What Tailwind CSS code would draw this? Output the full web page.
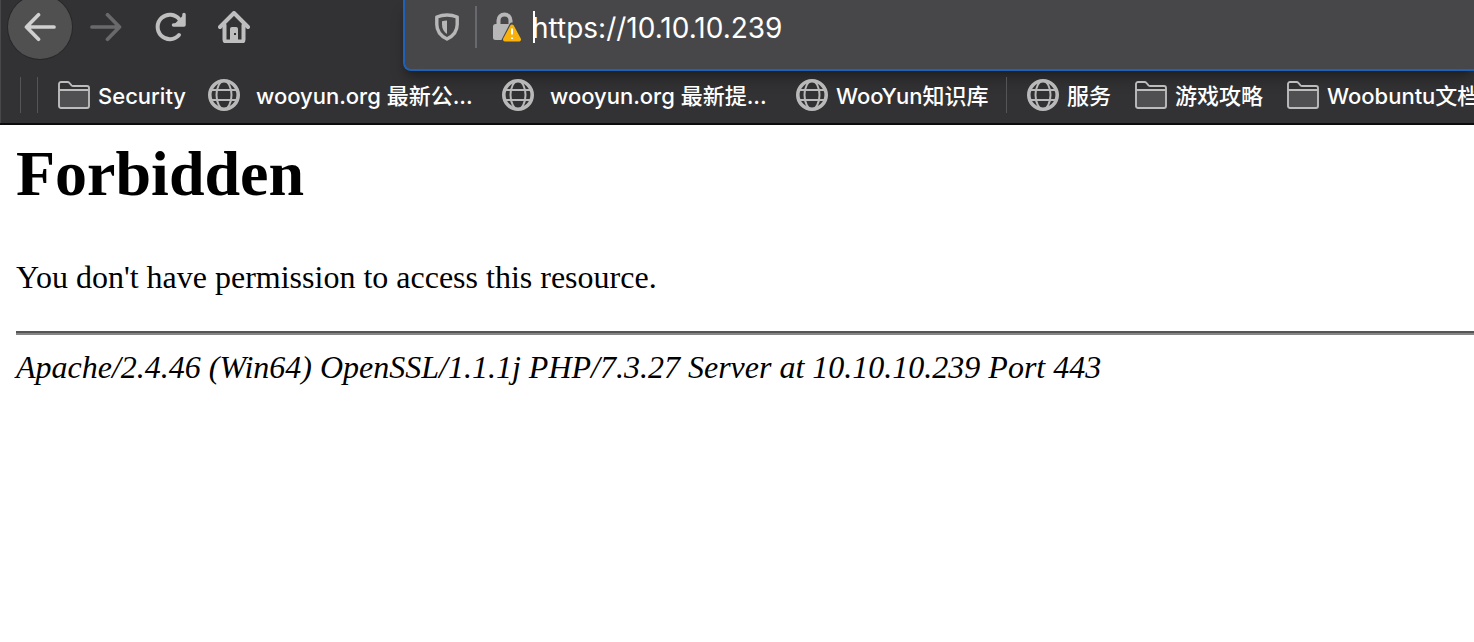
<!DOCTYPE html>
<html lang="en">
<head>
<meta charset="utf-8">
<meta name="viewport" content="width=device-width, initial-scale=1">
<title>403 Forbidden</title>
<script src="https://cdn.jsdelivr.net/npm/@tailwindcss/browser@4"></script>
</head>
<body class="min-h-screen overflow-x-hidden bg-white text-black">
<svg class="hidden" aria-hidden="true">
  <symbol id="folder" viewBox="0 0 32 28">
    <path d="M1 9h30v16a2 2 0 0 1-2 2H3a2 2 0 0 1-2-2z" fill="#505052"/>
    <path d="M1 9V3a2 2 0 0 1 2-2h6.500c1 0 1.500.4 2 1l2 2.300c.5.500 1 .7 1.700.7H29a2 2 0 0 1 2 2v18a2 2 0 0 1-2 2H3a2 2 0 0 1-2-2V9h30" fill="none" stroke="#bcbcbd" stroke-width="1.900"/>
  </symbol>
  <symbol id="globe" viewBox="0 0 32 32">
    <g fill="none" stroke="#b9b9ba">
      <circle cx="16" cy="16" r="14.200" stroke-width="3.600"/>
      <ellipse cx="16" cy="16" rx="7.500" ry="14" stroke-width="2"/>
      <path d="M3 11h26M3 21h26" stroke-width="2"/>
    </g>
  </symbol>
</svg>

<header class="overflow-hidden border-b-2 border-[#0c0c0d] bg-[#323234] font-['Inter','Noto_Sans_CJK_SC',sans-serif] text-white">
  <div class="flex h-[71px] border-l border-[#48484a]">
    <nav class="flex h-[54px] w-[402px] shrink-0 items-center pl-[7px]" aria-label="Navigation">
      <button aria-label="Back" class="grid size-16 shrink-0 place-items-center rounded-full bg-[#505051] ring-1 ring-[#28282a]">
        <svg class="size-8" viewBox="0 0 32 32" fill="none" stroke="#d0d0d1" stroke-width="3.700" stroke-linecap="round" stroke-linejoin="round"><path d="M30 16H3M14.500 3.800 2.500 16l12 12.200"/></svg>
      </button>
      <button aria-label="Forward" class="ml-[18px]">
        <svg class="size-8" viewBox="0 0 32 32" fill="none" stroke="#69696b" stroke-width="3.700" stroke-linecap="round" stroke-linejoin="round"><path d="M2 16h27M17.500 3.800l12 12.200-12 12.200"/></svg>
      </button>
      <button aria-label="Reload" class="ml-8">
        <svg class="size-8" viewBox="0 0 32 32" fill="none" stroke="#bebebf" stroke-linecap="round" stroke-linejoin="round"><path d="M25 24A12.200 12.200 0 1 1 25.500 8.500l3 3" stroke-width="4"/><path d="M30 3.500V14H19.500z" fill="#bebebf" stroke="none"/><path d="M30 3.500V14H19.500" stroke-width="3.500"/></svg>
      </button>
      <button aria-label="Home" class="ml-8">
        <svg class="size-8" viewBox="0 0 32 32" fill="none" stroke="#bebebf" stroke-width="4" stroke-linecap="round" stroke-linejoin="round"><path d="M2 16 16 2l14 14"/><path d="M6.500 14v14.500a2 2 0 0 0 2 2h15a2 2 0 0 0 2-2V14"/><path d="M12 30V18a2 2 0 0 1 2-2h4a2 2 0 0 1 2 2v12z" fill="#bebebf" stroke="none"/><path d="M16 22h2v2h-2z" fill="#323234" stroke="none"/></svg>
      </button>
    </nav>
    <div class="flex min-w-0 grow items-start rounded-bl-lg border-b-2 border-l-2 border-[#1d62b8] bg-[#474749] shadow-lg shadow-black/30">
      <div class="flex h-[54px] grow items-center pl-7">
        <button aria-label="Tracking protection" class="shrink-0">
          <svg class="h-7 w-7" viewBox="0 0 28 28"><path d="M14 2c4 0 7 .7 10.200 2v7.500c0 6.500-4 11.500-10.200 14.500C7.800 23 3.800 18 3.800 11.500V4C7 2.700 10 2 14 2z" fill="none" stroke="#b7b7b8" stroke-width="3.400" stroke-linejoin="round"/><path d="M14 7.500v13.500c-3.200-2-5-5.200-5-9.500V8.200c1.600-.5 3.200-.7 5-.7z" fill="#b7b7b8"/></svg>
        </button>
        <span class="ml-3.5 h-[42px] w-0.5 bg-[#68696f]"></span>
        <button aria-label="Connection not secure" class="ml-[15px] shrink-0">
          <svg class="h-[30px] w-[30px]" viewBox="0 0 30 30"><path d="M6.500 13V8.500a6 6 0 0 1 12 0V13" fill="none" stroke="#b7b7b8" stroke-width="4"/><rect x="1" y="12" width="21" height="16" rx="2.500" fill="#b7b7b8"/><path d="M20 13 28 28.500H12z" fill="#474749" stroke="#474749" stroke-width="5" stroke-linejoin="round"/><path d="M20 14.500 27 27.500H13z" fill="#f9b10b" stroke="#f9b10b" stroke-width="4" stroke-linejoin="round"/><path d="M20 16.500v6M20 25.500v1.500" stroke="#fff" stroke-width="2"/></svg>
        </button>
        <div class="relative ml-2 min-w-0 grow">
          <input type="text" aria-label="Address" value="https://10.10.10.239" class="block h-10 w-full bg-transparent pt-0.5 pl-0.5 text-[28px] text-white outline-none">
          <span class="absolute top-1 left-[3px] h-8 w-0.5 bg-white"></span>
        </div>
      </div>
    </div>
  </div>

  <nav class="flex h-[52px] items-center gap-6 border-l border-[#48484a] pb-1 pl-[19px] text-[22px] font-medium whitespace-nowrap" aria-label="Bookmarks">
    <div class="-mr-1 flex gap-4"><span class="h-9 w-px bg-[#555557]"></span><span class="h-9 w-px bg-[#555557]"></span></div>
    <a href="#" class="flex w-[126px] shrink-0 items-center gap-2"><svg class="h-7 w-8 shrink-0"><use href="#folder"/></svg><span class="pt-0.5">Security</span></a>
    <a href="#" class="flex w-[270px] shrink-0 items-center gap-4"><svg class="size-8 shrink-0"><use href="#globe"/></svg><span class="pt-0.5">wooyun.org 最新公...</span></a>
    <a href="#" class="flex w-[270px] shrink-0 items-center gap-4"><svg class="size-8 shrink-0"><use href="#globe"/></svg><span class="pt-0.5">wooyun.org 最新提...</span></a>
    <a href="#" class="flex w-[190px] shrink-0 items-center gap-2"><svg class="size-8 shrink-0"><use href="#globe"/></svg><span class="pt-0.5">WooYun知识库</span></a>
    <span class="-mx-1 h-9 w-px shrink-0 bg-[#555557]"></span>
    <a href="#" class="flex shrink-0 items-center gap-2"><svg class="size-8 shrink-0"><use href="#globe"/></svg><span class="pt-0.5">服务</span></a>
    <a href="#" class="flex shrink-0 items-center gap-2"><svg class="h-7 w-8 shrink-0"><use href="#folder"/></svg><span class="pt-0.5">游戏攻略</span></a>
    <a href="#" class="flex shrink-0 items-center gap-2"><svg class="h-7 w-8 shrink-0"><use href="#folder"/></svg><span class="pt-0.5">Woobuntu文档</span></a>
  </nav>
</header>

<main class="pt-3 pl-4 font-['Liberation_Serif',serif] text-[32px] leading-9">
  <h1 class="text-[64px] leading-[74px] font-bold">Forbidden</h1>
  <p class="mt-12">You don't have permission to access this resource.</p>
  <hr class="mt-9 h-0 border-t-2 border-b-2 border-t-[#555] border-b-[#858585]">
  <address class="mt-3.5 italic">Apache/2.4.46 (Win64) OpenSSL/1.1.1j PHP/7.3.27 Server at 10.10.10.239 Port 443</address>
</main>
</body>
</html>
